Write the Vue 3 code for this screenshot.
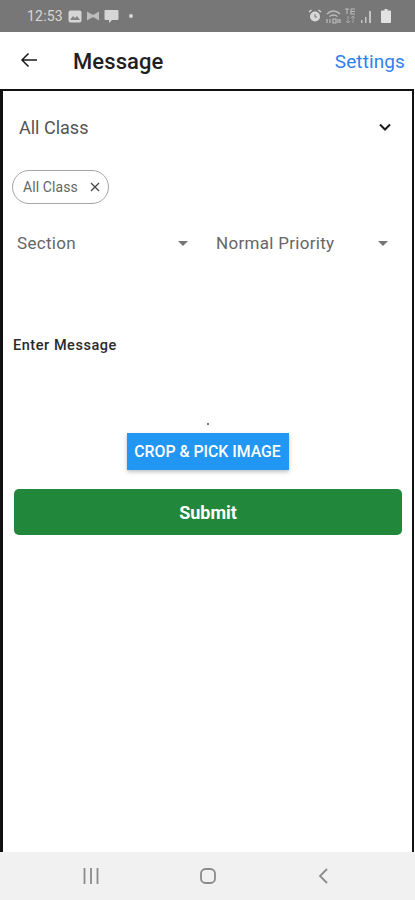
<template>
  <div class="screen">
    <div class="status-bar">
      <span class="time">12:53</span>
      <svg class="status-icon" width="14" height="13" viewBox="0 0 14 13">
        <rect x="0.5" y="0.5" width="13" height="12" rx="2" fill="#d6d6d6" />
        <path d="M2 10l3-4 2 2 2-2 3 4z" fill="#858585" />
      </svg>
      <svg class="status-icon" width="14" height="12" viewBox="0 0 14 12">
        <path d="M1 1.500l5 3h2l5-3v9l-5-3H6l-5 3z" fill="#bdbdbd" />
      </svg>
      <svg class="status-icon" width="15" height="15" viewBox="0 0 15 15">
        <path d="M1.500 1h12a1 1 0 0 1 1 1v8a1 1 0 0 1-1 1H8l-3 3v-3H1.500a1 1 0 0 1-1-1V2a1 1 0 0 1 1-1z" fill="#d6d6d6" />
      </svg>
      <span class="status-dot"></span>
      <span class="status-spacer"></span>
      <svg width="14" height="14" viewBox="0 0 14 14">
        <circle cx="7" cy="7.500" r="5" fill="#d8d8d8" />
        <path d="M1 3l2.500-2M13 3l-2.500-2" stroke="#d8d8d8" stroke-width="1.500" />
        <path d="M7 5v3h2" stroke="#777" stroke-width="1" fill="none" />
      </svg>
      <svg width="15" height="15" viewBox="0 0 15 15">
        <path d="M1 5c4-4 9-4 13 0M3.500 7.500c2.500-2 5.500-2 8 0" stroke="#bdbdbd" stroke-width="1.500" fill="none" />
        <path d="M1 10v4M4 10v4M7 10h3v4H7zM12 10v4M14 10v4" stroke="#bdbdbd" stroke-width="1.200" fill="none" />
      </svg>
      <svg width="11" height="16" viewBox="0 0 11 16">
        <path d="M0 1h4M2 1v5M6 1v5h4M6 3.500h4M6 1h4" stroke="#bdbdbd" stroke-width="1.100" fill="none" />
        <path d="M3 8v7M1 13l2 2 2-2M8 15V8M6 10l2-2 2 2" stroke="#a8a8a8" stroke-width="1" fill="none" />
      </svg>
      <svg width="12" height="13" viewBox="0 0 12 13">
        <path d="M1 13h1.500v-3H1zM5 13h1.500V7H5zM9 13h2V1H9z" fill="#c4c4c4" />
      </svg>
      <svg class="battery" width="10" height="14" viewBox="0 0 10 14">
        <path d="M3.500 0h3v1.500H9a1 1 0 0 1 1 1V13a1 1 0 0 1-1 1H1a1 1 0 0 1-1-1V2.500a1 1 0 0 1 1-1h2.500z" fill="#e2e2e2" />
      </svg>
    </div>

    <header class="app-bar">
      <svg class="back" width="18" height="16" viewBox="0 0 18 16">
        <path d="M17 8H2M8.500 1.500L2 8l6.500 6.500" stroke="#1c1c1c" stroke-width="1.500" fill="none" />
      </svg>
      <h1 class="title">Message</h1>
      <a class="settings">Settings</a>
    </header>

    <main class="content">
      <div class="class-select">
        <span>All Class</span>
        <svg width="12" height="8" viewBox="0 0 12 8">
          <path d="M1 1.500l5 5 5-5" stroke="#1a1a1a" stroke-width="2" fill="none" />
        </svg>
      </div>

      <div class="chip">
        <span>All Class</span>
        <svg width="10" height="10" viewBox="0 0 10 10">
          <path d="M1 1l8 8M9 1l-8 8" stroke="#444" stroke-width="1.300" />
        </svg>
      </div>

      <div class="dropdowns">
        <div class="dropdown first">
          <span>Section</span>
          <i class="caret"></i>
        </div>
        <div class="dropdown second">
          <span>Normal Priority</span>
          <i class="caret"></i>
        </div>
      </div>

      <label class="message-label">Enter Message</label>
      <div class="dot"></div>
      <button class="pick-btn">CROP &amp; PICK IMAGE</button>
      <button class="submit-btn">Submit</button>
    </main>

    <nav class="nav-bar">
      <svg width="16" height="16" viewBox="0 0 16 16">
        <path d="M1.500 0v16M8 0v16M14.500 0v16" stroke="#8b8b8b" stroke-width="1.800" />
      </svg>
      <svg width="16" height="16" viewBox="0 0 16 16">
        <rect x="1" y="1" width="14" height="14" rx="4.500" fill="none" stroke="#8b8b8b" stroke-width="1.800" />
      </svg>
      <svg width="16" height="16" viewBox="0 0 16 16">
        <path d="M11 1L4 8l7 7" fill="none" stroke="#8b8b8b" stroke-width="1.800" />
      </svg>
    </nav>
  </div>
</template>

<script setup>
</script>

<style>
html, body {
  margin: 0;
  background: #fff;
}
</style>

<style scoped>
.screen {
  width: 415px;
  height: 900px;
  display: flex;
  flex-direction: column;
  overflow: hidden;
  font-family: Roboto, "Noto Sans", sans-serif;
  background: #fff;
}

.status-bar {
  height: 32px;
  flex: none;
  background: #777;
  display: flex;
  align-items: center;
  gap: 4px;
  padding: 0 24px 0 27px;
  box-sizing: border-box;
  color: #d8d8d8;
}

.time {
  font-size: 14px;
  margin-right: 1px;
  letter-spacing: 0.2px;
}

.status-dot {
  width: 4px;
  height: 4px;
  margin-left: 6px;
  border-radius: 50%;
  background: #d8d8d8;
}

.status-spacer {
  flex: 1;
}

.battery {
  margin-left: 5px;
}

.app-bar {
  height: 57px;
  flex: none;
  box-sizing: border-box;
  display: flex;
  align-items: center;
  padding: 2px 10px 0 20px;
}

.back {
  margin: 0 35px 4px 0;
}

.title {
  margin: 0;
  font-size: 22px;
  font-weight: 500;
  color: #1f1f1f;
  letter-spacing: 0.1px;
}

.settings {
  margin-left: auto;
  font-size: 19px;
  color: #2f80ed;
  letter-spacing: 0.1px;
}

.content {
  flex: 1;
  margin-right: 1px;
  border-top: 2px solid #111;
  border-left: 3px solid #111;
  border-right: 2px solid #111;
  box-sizing: border-box;
  padding: 0 10px;
  display: flex;
  flex-direction: column;
}

.class-select {
  height: 72px;
  flex: none;
  display: flex;
  align-items: center;
  justify-content: space-between;
  margin: 0 11px 0 6px;
  font-size: 18px;
  color: #555;
}

.chip {
  margin: 7px 0 0 -1px;
  width: 97px;
  height: 34px;
  box-sizing: border-box;
  border: 1px solid #a6a6a6;
  border-radius: 17px;
  padding: 0 8px 0 10px;
  display: flex;
  align-items: center;
  justify-content: space-between;
  font-size: 14px;
  letter-spacing: 0.1px;
  color: #666;
}

.dropdowns {
  display: flex;
  margin-top: 21px;
  margin-left: 4px;
}

.dropdown {
  display: flex;
  align-items: center;
  justify-content: space-between;
  height: 36px;
  font-size: 17px;
  letter-spacing: 0.3px;
  color: #666;
}

.first {
  width: 171px;
}

.second {
  width: 172px;
  margin-left: 28px;
}

.caret {
  width: 0;
  height: 0;
  border-left: 5px solid transparent;
  border-right: 5px solid transparent;
  border-top: 5px solid #757575;
}

.message-label {
  margin-top: 75px;
  font-size: 14.5px;
  font-weight: 500;
  line-height: 20px;
  color: #2a2a2a;
  letter-spacing: 0.55px;
}

.dot {
  width: 2px;
  height: 2px;
  margin: 67px auto 0;
  background: #777;
}

.pick-btn {
  align-self: center;
  width: 162px;
  height: 37px;
  margin-top: 8px;
  border: none;
  padding: 0;
  background: #2196f3;
  color: #fff;
  font-family: inherit;
  font-size: 15.8px;
  font-weight: 500;
  box-shadow: 0 2px 4px rgba(0, 0, 0, 0.25);
}

.submit-btn {
  height: 46px;
  margin: 19px 0 0 1px;
  width: 388px;
  border: none;
  border-radius: 5px;
  padding: 0;
  background: #21873a;
  color: #fff;
  font-family: inherit;
  font-size: 18px;
  font-weight: 700;
}

.nav-bar {
  height: 48px;
  flex: none;
  background: #f1f1f1;
  display: flex;
  align-items: center;
  padding: 0 83px;
  justify-content: space-between;
}
</style>
